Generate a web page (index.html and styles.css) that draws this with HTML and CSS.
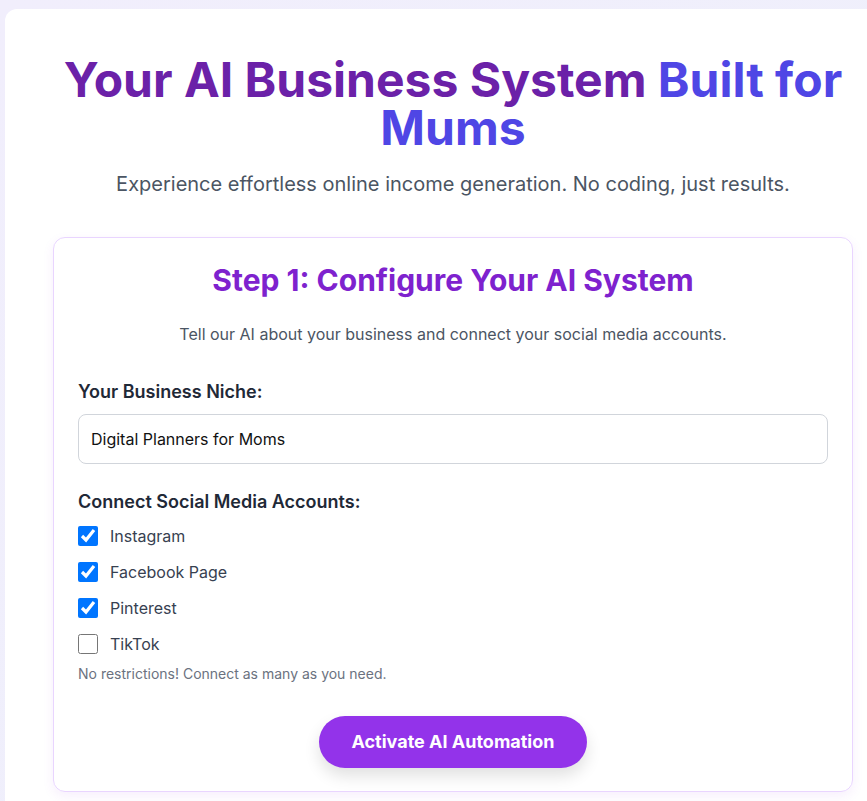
FILE: index.html
```html
<!DOCTYPE html>
<html lang="en">
<head>
    <meta charset="UTF-8">
    <meta name="viewport" content="width=device-width, initial-scale=1.0">
    <title>AI Business System for Mums</title>
    <link rel="stylesheet" href="styles.css">
</head>
<body>
    <div class="container">
        <h1 class="title">Your AI Business System <span>Built for Mums</span></h1>
        <p class="subtitle">Experience effortless online income generation. No coding, just results.</p>

        <div class="card">
            <h2 class="card-title">Step 1: Configure Your AI System</h2>
            <p class="card-desc">Tell our AI about your business and connect your social media accounts.</p>

            <div class="field">
                <label class="field-label" for="niche">Your Business Niche:</label>
                <input class="text-input" id="niche" type="text" value="Digital Planners for Moms">
            </div>

            <div class="field">
                <div class="field-label">Connect Social Media Accounts:</div>
                <div class="check-list">
                    <label class="check-row"><input type="checkbox" checked> Instagram</label>
                    <label class="check-row"><input type="checkbox" checked> Facebook Page</label>
                    <label class="check-row"><input type="checkbox" checked> Pinterest</label>
                    <label class="check-row"><input type="checkbox"> TikTok</label>
                </div>
                <p class="note">No restrictions! Connect as many as you need.</p>
            </div>

            <div class="actions">
                <button class="activate-btn">Activate AI Automation</button>
            </div>
        </div>
    </div>
</body>
</html>
```

FILE: styles.css
```css
html, body {
    overflow-x: hidden;
}
body {
    font-family: 'Inter', 'Liberation Sans', sans-serif;
    background: linear-gradient(135deg, #f1eefc 0%, #eef0fb 100%);
    margin: 0;
    padding: 9px 0 0 5px;
    color: #1f2937;
    min-height: 100vh;
    box-sizing: border-box;
}
.container {
    width: 896px;
    box-sizing: border-box;
    background: #fff;
    border-radius: 12px 12px 0 0;
    padding: 47px 48px 40px;
    min-height: 800px;
}
.title {
    font-size: 48px;
    line-height: 48px;
    font-weight: 700;
    color: #6b21a8;
    text-align: center;
    margin: 0 0 18px;
}
.title span {
    color: #4f46e5;
}
.subtitle {
    font-size: 20px;
    line-height: 28px;
    color: #4b5563;
    text-align: center;
    margin: 0 0 39px;
}
.card {
    border: 1px solid #e9d5ff;
    border-radius: 12px;
    padding: 24px 24px 23px;
    box-shadow: 0 4px 12px rgba(147, 51, 234, 0.08);
}
.card-title {
    font-size: 30px;
    line-height: 36px;
    font-weight: 700;
    color: #7e22ce;
    text-align: center;
    margin: 0 0 24px;
}
.card-desc {
    font-size: 16px;
    line-height: 24px;
    color: #4b5563;
    text-align: center;
    margin: 0 0 32px;
}
.field {
    margin-bottom: 24px;
}
.field-label {
    display: block;
    font-size: 18px;
    line-height: 28px;
    font-weight: 600;
    color: #1f2937;
    margin-bottom: 8px;
}
.text-input {
    width: 100%;
    box-sizing: border-box;
    padding: 12px;
    font-family: inherit;
    font-size: 16px;
    line-height: 24px;
    height: 50px;
    color: #111;
    border: 1px solid #d1d5db;
    border-radius: 8px;
    outline: none;
}
.check-list {
    display: flex;
    flex-direction: column;
    gap: 12px;
}
.check-row {
    display: flex;
    align-items: center;
    gap: 12px;
    font-size: 16px;
    line-height: 24px;
    color: #374151;
}
.check-row input {
    width: 20px;
    height: 20px;
    margin: 0;
    accent-color: #0075ff;
}
.note {
    font-size: 14px;
    line-height: 20px;
    color: #6b7280;
    margin: 8px 0 0;
}
.actions {
    display: flex;
    justify-content: center;
    padding-top: 8px;
}
.activate-btn {
    font-family: inherit;
    font-size: 18px;
    line-height: 28px;
    font-weight: 700;
    color: #fff;
    background: #9333ea;
    border: none;
    border-radius: 999px;
    padding: 12px 32px;
    box-shadow: 0 8px 16px rgba(0, 0, 0, 0.12);
    cursor: pointer;
}
```
